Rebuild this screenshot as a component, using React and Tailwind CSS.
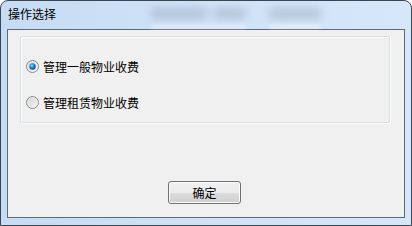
import React from "react";

function Radio({ checked }) {
  return (
    <svg width="13" height="13" viewBox="0 0 13 13" className="shrink-0">
      <defs>
        <linearGradient id={checked ? "rg1" : "rg0"} x1="0" y1="0" x2="1" y2="1">
          <stop offset="0" stopColor="#cfcfcf" />
          <stop offset="1" stopColor="#f7f7f7" />
        </linearGradient>
        <radialGradient id="dot" cx="0.4" cy="0.35" r="0.7">
          <stop offset="0" stopColor="#8fd3ff" />
          <stop offset="0.45" stopColor="#2a8ad8" />
          <stop offset="1" stopColor="#0b3f86" />
        </radialGradient>
      </defs>
      <circle cx="6.5" cy="6.5" r="6" fill={`url(#${checked ? "rg1" : "rg0"})`} stroke="#8a8a8a" strokeWidth="1" />
      <circle cx="6.5" cy="6.5" r="4.6" fill="none" stroke="#f4f4f4" strokeWidth="0.8" />
      {checked && <circle cx="6.5" cy="6.5" r="3.2" fill="url(#dot)" />}
    </svg>
  );
}

export default function App() {
  const font = { fontFamily: '"Noto Sans CJK SC", "Noto Sans", sans-serif' };
  return (
    <div
      className="relative w-[412px] h-[226px] rounded-t-[8px] border border-[#3c4650] bg-gradient-to-r from-[#c6dcf4] via-[#cfe2f7] to-[#d6e7f9] flex flex-col overflow-hidden"
      style={font}
    >
      {/* blurred background showing through glass */}
      <div className="absolute left-[150px] top-[7px] w-[56px] h-[11px] rounded-[4px] bg-[#7d8fa3]/35 blur-[4px]" />
      <div className="absolute left-[213px] top-[7px] w-[32px] h-[11px] rounded-[4px] bg-[#7d8fa3]/35 blur-[4px]" />
      <div className="absolute left-[268px] top-[7px] w-[52px] h-[11px] rounded-[4px] bg-[#7d8fa3]/35 blur-[4px]" />
      <div className="absolute left-[150px] top-[24px] w-[95px] h-[3px] bg-white/60 blur-[2px]" />
      <div className="absolute left-[268px] top-[24px] w-[52px] h-[3px] bg-white/60 blur-[2px]" />

      <div className="relative h-[28px] shrink-0 flex items-center pl-[7px] text-[12px] text-black leading-none pb-[2px]">
        操作选择
      </div>
      <div className="mx-[6px] mb-[7px] flex-1 border border-[#5d6b78] bg-[#f0f0f0] flex flex-col">
        <div className="mt-[6px] ml-[12px] w-[370px] h-[87px] border border-[#d5dfe5] rounded-[2px] shadow-[inset_1px_1px_0_#ffffff,1px_1px_0_#ffffff] flex flex-col pt-[23px] pl-[5px] gap-[23px]">
          <div className="flex items-center gap-[4px] h-[13px] text-[12px] text-black leading-none">
            <Radio checked />
            <span>管理一般物业收费</span>
          </div>
          <div className="flex items-center gap-[4px] h-[13px] text-[12px] text-black leading-none">
            <Radio checked={false} />
            <span>管理租赁物业收费</span>
          </div>
        </div>
        <div className="mt-[58px] ml-[160px] w-[73px] h-[23px] rounded-[3px] border border-[#707070] bg-[linear-gradient(#f2f2f2_0%,#ebebeb_50%,#dddddd_50%,#cfcfcf_100%)] shadow-[inset_0_0_0_1px_#fcfcfc] flex items-center justify-center text-[12px] text-black leading-none">
          确定
        </div>
      </div>
    </div>
  );
}
